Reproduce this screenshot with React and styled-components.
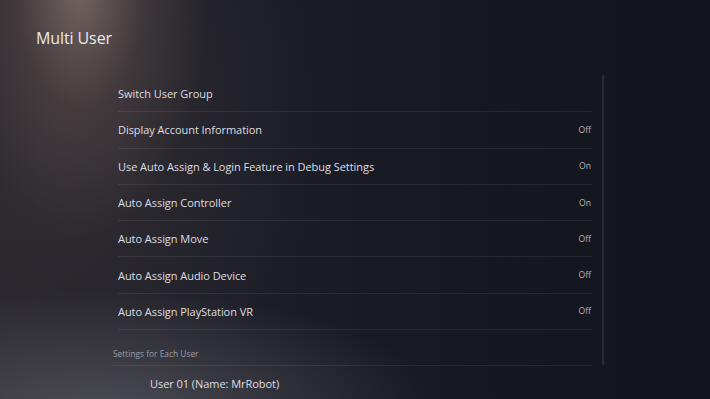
import React from "react";
import styled, { createGlobalStyle } from "styled-components";

const GlobalStyle = createGlobalStyle`
  html, body {
    margin: 0;
    padding: 0;
    background: #14161f;
  }
  body {
    font-family: "Open Sans", "Noto Sans", sans-serif;
    -webkit-font-smoothing: antialiased;
  }
`;

const Screen = styled.div`
  width: 710px;
  height: 399px;
  overflow: hidden;
  position: relative;
  background:
    radial-gradient(ellipse 130px 260px at 80px -20px, rgba(165, 142, 132, 0.6), rgba(115, 96, 90, 0.28) 50%, rgba(80, 70, 70, 0) 100%),
    radial-gradient(ellipse 340px 120px at 100px 410px, rgba(110, 110, 118, 0.55), rgba(80, 80, 90, 0) 100%),
    radial-gradient(ellipse 260px 330px at 60px 120px, rgba(70, 60, 62, 0.45), rgba(40, 38, 46, 0) 100%),
    linear-gradient(90deg, #24232b 0%, #1d1e27 35%, #161822 65%, #12141e 100%);
`;

const Title = styled.h1`
  margin: 0;
  padding: 27px 0 0 36px;
  height: 48px;
  box-sizing: border-box;
  font-size: 16px;
  font-weight: 400;
  color: #e9e9ec;
  letter-spacing: -0.1px;
`;

const Body = styled.div`
  display: flex;
  align-items: flex-start;
  padding: 28px 0 0 113px;
  gap: 10px;
`;

const List = styled.div`
  width: 479px;
  display: flex;
  flex-direction: column;
`;

const Row = styled.div`
  height: 36.3px;
  margin-left: 5px;
  display: flex;
  align-items: center;
  justify-content: space-between;
  box-sizing: border-box;
  border-bottom: 1px solid rgba(255, 255, 255, 0.07);
  padding-left: ${(p) => (p.$indent ? "32px" : "0")};
`;

const Label = styled.span`
  font-size: 11px;
  color: #dedee3;
  letter-spacing: -0.05px;
`;

const Value = styled.span`
  font-size: 8.6px;
  color: #b4b6bd;
  padding-right: 1px;
`;

const SectionHead = styled.div`
  height: 36px;
  display: flex;
  align-items: center;
  padding-top: 11px;
  box-sizing: border-box;
  font-size: 8.4px;
  color: #9a9ca4;
  border-bottom: 1px solid rgba(255, 255, 255, 0.07);
`;

const ScrollTrack = styled.div`
  width: 2px;
  height: 290px;
  margin-top: -1px;
  background: rgba(255, 255, 255, 0.1);
  border-radius: 1px;
`;

const items = [
  { label: "Switch User Group" },
  { label: "Display Account Information", value: "Off" },
  { label: "Use Auto Assign & Login Feature in Debug Settings", value: "On" },
  { label: "Auto Assign Controller", value: "On" },
  { label: "Auto Assign Move", value: "Off" },
  { label: "Auto Assign Audio Device", value: "Off" },
  { label: "Auto Assign PlayStation VR", value: "Off" },
];

export default function App() {
  return (
    <>
      <GlobalStyle />
      <Screen>
        <Title>Multi User</Title>
        <Body>
          <List>
            {items.map((it) => (
              <Row key={it.label}>
                <Label>{it.label}</Label>
                {it.value && <Value>{it.value}</Value>}
              </Row>
            ))}
            <SectionHead>Settings for Each User</SectionHead>
            <Row $indent>
              <Label>User 01 (Name: MrRobot)</Label>
            </Row>
          </List>
          <ScrollTrack />
        </Body>
      </Screen>
    </>
  );
}
